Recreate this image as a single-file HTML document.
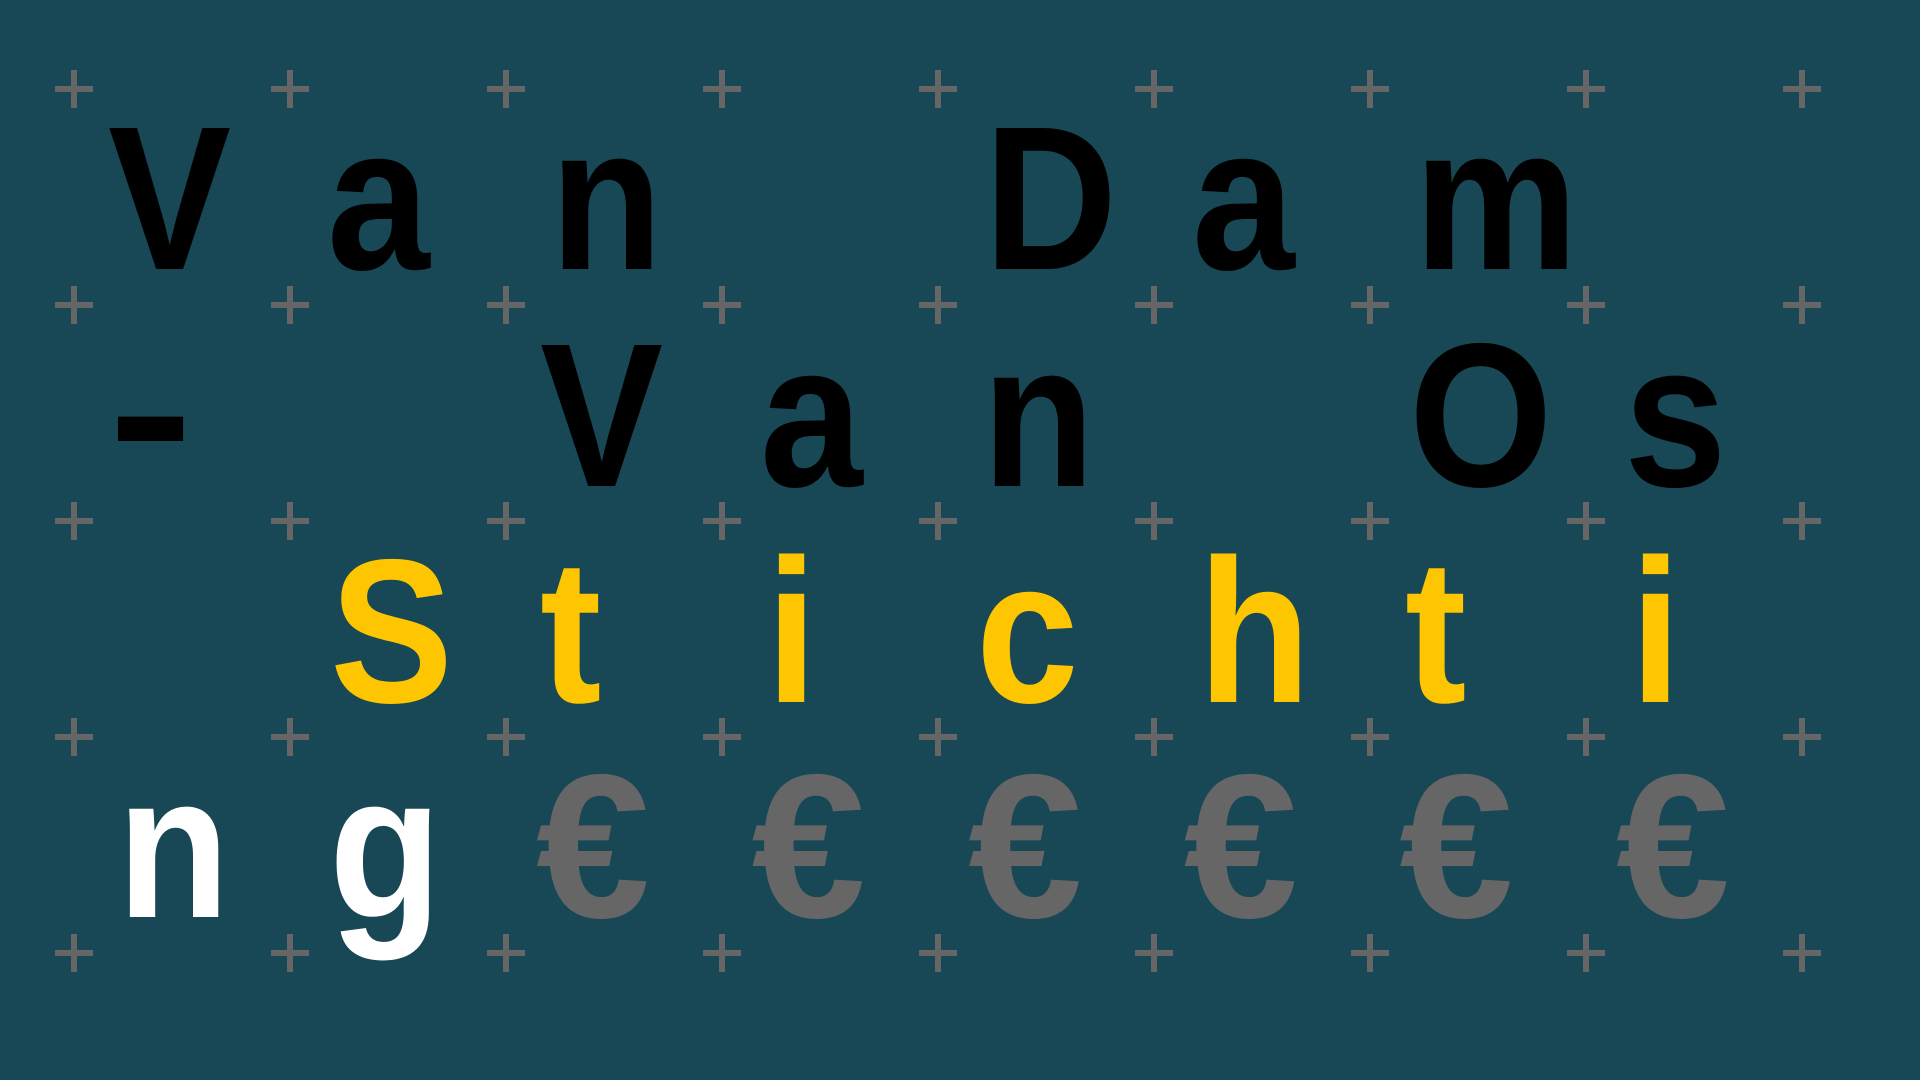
<!DOCTYPE html>
<html><head><meta charset="utf-8"><style>
html,body{margin:0;padding:0}
body{width:1920px;height:1080px;background:#184755;position:relative;overflow:hidden;font-family:"Liberation Sans",sans-serif;font-weight:bold}
.p{position:absolute;width:38px;height:38px}
.p:before,.p:after{content:"";position:absolute;background:#666}
.p:before{left:0;top:16px;width:38px;height:6px}
.p:after{top:0;left:16px;width:6px;height:38px}
.l{position:absolute;font-size:205px;line-height:205px;height:205px;transform-origin:0 0;white-space:pre}
</style></head><body>
<script>
const xs=[],ys=[89,305,521,737,953];
for(let i=0;i<9;i++)xs.push(73.5+216*i);
let h='';
for(const y of ys)for(const x of xs)h+=`<div class="p" style="left:${x-19}px;top:${y-19}px"></div>`;
const K='#000',Y='#fdc600',W='#fff',G='#666';
const rows=[
 [['V',90,K],['a',269,K],['n',451,K],['D',805,K],['a',975,K],['m',1156,K]],
 [['-',93,K],['V',443,K],['a',622,K],['n',804,K],['O',1152,K],['s',1328,K]],
 [['S',271,Y],['t',443,Y],['i',627,Y],['c',799,Y],['h',980,Y],['t',1149,Y],['i',1333,Y]],
 [['n',97,W],['g',270,W],['€',441,G],['€',617,G],['€',794,G],['€',970,G],['€',1146,G],['€',1323,G]]
];
const bl=[269,486,702,917];
rows.forEach((r,ri)=>r.forEach(c=>{
 let sx=0.9,off=2,dy=0;
 if(c[0]=='€'){sx=1;off=4;}
 if(c[0]=='-'){sx=1.25;off=6;dy=-4;}
 h+=`<div class="l" style="left:${c[1]*1.2245-off}px;top:${bl[ri]-173.5+dy}px;color:${c[2]};transform:scaleX(${sx})">${c[0]}</div>`}));
document.body.innerHTML=h;
</script>
</body></html>
